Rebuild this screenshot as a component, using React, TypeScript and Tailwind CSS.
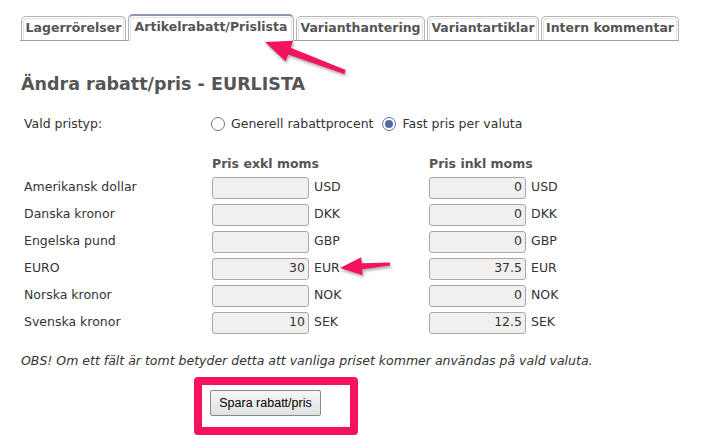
import clsx from "clsx";

const tabs = [
  { label: "Lagerrörelser", w: "w-[105px]" },
  { label: "Artikelrabatt/Prislista", w: "w-[166px]", active: true },
  { label: "Varianthantering", w: "w-[129px]" },
  { label: "Variantartiklar", w: "w-[112px]" },
  { label: "Intern kommentar", w: "w-[138px]" },
];

const rows = [
  { name: "Amerikansk dollar", cur: "USD", exkl: "", inkl: "0" },
  { name: "Danska kronor", cur: "DKK", exkl: "", inkl: "0" },
  { name: "Engelska pund", cur: "GBP", exkl: "", inkl: "0" },
  { name: "EURO", cur: "EUR", exkl: "30", inkl: "37.5" },
  { name: "Norska kronor", cur: "NOK", exkl: "", inkl: "0" },
  { name: "Svenska kronor", cur: "SEK", exkl: "10", inkl: "12.5" },
];

function Tab({ label, w, active }: { label: string; w: string; active?: boolean }) {
  return (
    <div
      className={clsx(
        "flex items-center justify-center rounded-t-[5px] border border-b-0 bg-white text-[12.5px] font-bold text-[#555]",
        "shadow-[inset_1px_1px_0_#fff,inset_-1px_0_0_#fff,inset_2px_2px_0_#e2e2e2,inset_-2px_0_0_#e2e2e2]",
        w,
        active
          ? "mb-[-1px] h-[27px] border-[#b0b0b0] border-t-2 border-t-[#8a94bc] pb-[2px]"
          : "h-[24px] border-[#b5b5b5]"
      )}
    >
      {label}
    </div>
  );
}

function Radio({ checked }: { checked?: boolean }) {
  return (
    <span
      className={clsx(
        "flex h-[14px] w-[14px] items-center justify-center rounded-full border bg-white",
        checked ? "border-[#5a72a8]" : "border-[#777]"
      )}
    >
      {checked && <span className="h-[8px] w-[8px] rounded-full bg-[#4f6aa3]" />}
    </span>
  );
}

function PriceInput({ value }: { value: string }) {
  return (
    <div className="flex h-[22px] w-[97px] items-center justify-end rounded-[3px] border border-[#a8a8a8] bg-[#f1f0ef] pr-[3px] text-[#333]">
      {value}
    </div>
  );
}

export default function App() {
  return (
    <div className="relative h-[448px] w-[706px] overflow-hidden bg-white font-['DejaVu_Sans',sans-serif] text-[12.5px] text-[#333]">
      <div className="ml-[20px] mt-[14px] flex w-[659px] items-end gap-[2px] border-b border-[#a0a0a0] pl-[1px]">
        {tabs.map((t) => (
          <Tab key={t.label} {...t} />
        ))}
      </div>

      <h1 className="ml-[21px] mt-[32px] h-[22px] text-[17.5px] font-bold leading-[22px] text-[#555]">
        Ändra rabatt/pris - EURLISTA
      </h1>

      <div className="ml-[24px] mt-[19px] flex h-[20px] items-center">
        <span className="w-[187px]">Vald pristyp:</span>
        <Radio />
        <span className="ml-[6px]">Generell rabattprocent</span>
        <span className="ml-[8px]">
          <Radio checked />
        </span>
        <span className="ml-[7px]">Fast pris per valuta</span>
      </div>

      <div className="ml-[212px] mt-[20px] flex h-[20px] items-center font-bold text-[#555]">
        <span className="w-[217px]">Pris exkl moms</span>
        <span>Pris inkl moms</span>
      </div>

      <div className="ml-[24px] flex flex-col">
        {rows.map((r) => (
          <div key={r.cur} className="flex h-[27px] items-center">
            <span className="w-[188px]">{r.name}</span>
            <PriceInput value={r.exkl} />
            <span className="ml-[5px] w-[115px]">{r.cur}</span>
            <PriceInput value={r.inkl} />
            <span className="ml-[5px]">{r.cur}</span>
          </div>
        ))}
      </div>

      <p className="ml-[21px] mt-[16px] h-[18px] text-[12.5px] italic leading-[18px] text-[#333]">
        OBS! Om ett fält är tomt betyder detta att vanliga priset kommer användas på vald valuta.
      </p>

      <div className="ml-[194px] mt-[7px] h-[58px] w-[164px] rounded-[4px] border-[8px] border-[#f5135e] pl-[8px] pt-[5px]">
        <button className="h-[26px] w-[111px] rounded-[2px] border border-[#8a8a8a] bg-gradient-to-b from-[#f6f6f6] to-[#e1e1e1] font-['Liberation_Sans',sans-serif] text-[12.5px] text-black">
          Spara rabatt/pris
        </button>
      </div>

      <svg
        className="pointer-events-none absolute left-0 top-0 drop-shadow-[1px_2px_1.5px_rgba(0,0,0,0.35)]"
        width="706"
        height="448"
      >
        <polygon
          fill="#f5135e"
          points="265,42 293.3,40.8 290.6,47.8 345.7,70.1 344.3,73.9 288.2,54.4 285.6,61.4"
        />
        <polygon
          fill="#f5135e"
          points="340,268 361.2,257.2 361.7,263.2 389.9,262.5 390.1,265.5 362.2,269.2 362.7,275.2"
        />
      </svg>
    </div>
  );
}
